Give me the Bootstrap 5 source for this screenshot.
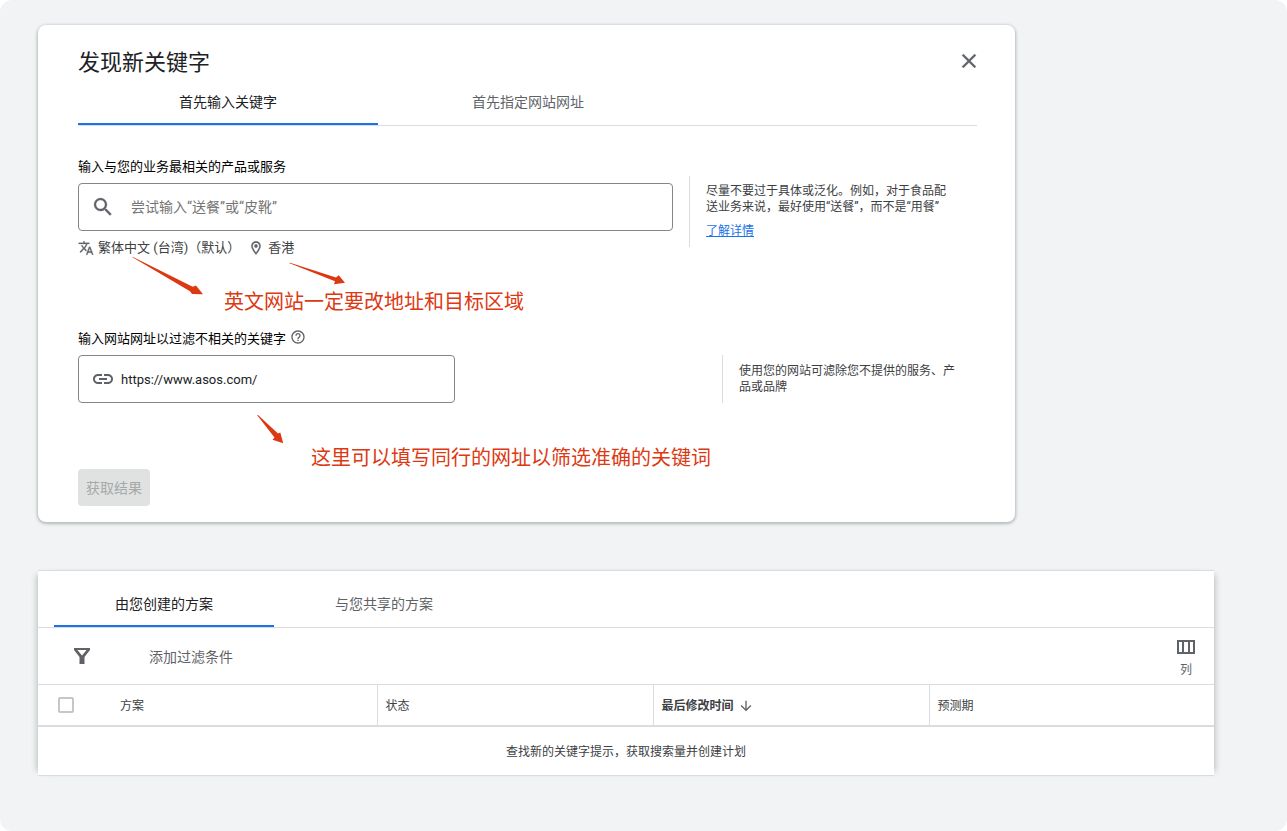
<!DOCTYPE html>
<html lang="zh-CN">
<head>
<meta charset="utf-8">
<meta name="viewport" content="width=device-width, initial-scale=1">
<title>发现新关键字</title>
<link href="https://cdn.jsdelivr.net/npm/bootstrap@5.3.0/dist/css/bootstrap.min.css" rel="stylesheet">
<style>
  body { font-family: Roboto, "Noto Sans CJK SC", sans-serif; font-size: 12px; line-height: 16px; color: #3c4043; background: #fff; }
  svg { fill: #5f6368; flex: none; display: block; }
  .bolder { stroke: #5f6368; stroke-width: .3; }
  .page { background: #f1f3f4; border-radius: 12px; padding: 25px 73px 55px 38px; }

  .finder { max-width: 977px; border-radius: 8px; padding: 24px 38px 16px 40px; box-shadow: 0 1px 3px 1px rgba(60,64,67,.32); }
  .finder h1 { font-size: 22px; line-height: 28px; font-weight: 400; color: #202124; }
  .close-btn { line-height: 0; margin-right: -4px; }

  .tab-bar { border-bottom: 1px solid #dadce0; }
  .tab-bar .nav-link { font-size: 14px; line-height: 20px; color: #5f6368; background: none; border: 0; border-bottom: 2px solid transparent; border-radius: 0; padding: 0; }
  .tab-bar .nav-link.active { color: #202124; border-bottom-color: #1a73e8; }
  .finder .tab-bar { margin-top: 3px; }
  .finder .nav-link { width: 300px; height: 45px; }
  .plans .nav-link { width: 220px; height: 56px; padding-top: 12px; }

  .field-title { font-size: 13px; line-height: 20px; color: #000; margin-bottom: 6px; }
  .text-field { height: 48px; border: 1px solid #80868b; border-radius: 4px; padding: 0 12px; }
  .text-field .form-control { font-size: 14px; line-height: 20px; color: #202124; background: none; }
  .text-field .form-control::placeholder { color: #757575; }
  .text-field .url-input { font-size: 13px; line-height: 20px; padding-top: 1px !important; margin-left: 6px; }
  .url-field { width: 377px; }
  .first-row { margin-top: 31px; gap: 16px; }
  .options { font-size: 13px; line-height: 20px; margin-top: 7px; }
  .options button { color: #3c4043; }
  .tip { border-left: 1px solid #dadce0; }
  .tip-wide { width: 288px; margin-top: 19px; padding: 7px 20px 8px 16px; }
  .tip-narrow { width: 255px; padding: 8px 14px 8px 16px; }
  .tip a { color: #1a73e8; }

  .remark { font-size: 20px; line-height: 24px; color: #dc3912; }
  .remark svg { position: absolute; fill: #dc3912; }
  .remark-area { margin: 32px 0 15px; padding-left: 146px; }
  .remark-area svg { left: 54px; top: -33px; }
  .remark-site { margin-top: 43px; padding-left: 233px; }
  .remark-site svg { left: 177px; top: -33px; }
  .submit-btn { height: 37px; padding: 0 8px; margin-top: -1px; border: 0; border-radius: 4px; font-size: 14px; line-height: 20px; }
  .submit-btn:disabled { background: #e0e2e1; color: #a6a8aa; opacity: 1; }

  .plans { margin-top: 48px; border: solid #dadce0; border-width: 1px 0; box-shadow: 6px 0 6px -5px rgba(60,64,67,.3), -6px 0 6px -5px rgba(60,64,67,.3); }
  .filter-bar { height: 57px; border-bottom: 1px solid #dadce0; padding: 0 16px 0 36px; }
  .filter-input { font-size: 14px; line-height: 22px; margin: 2px 0 0 59px; }
  .filter-input::placeholder { color: #5f6368; }
  .columns-btn { color: #5f6368; margin-top: 6px; }
  .plan-table { table-layout: fixed; color: #3c4043; }
  .plan-table th { height: 41px; padding: 1px 8px 0; font-weight: 400; border: 0; }
  .plan-table th:first-child { padding-top: 0; }
  .plan-table th + th + th { border-left: 1px solid #dadce0; }
  .plan-table thead tr { border-bottom: 2px solid #dadce0; }
  .plan-table td { height: 49px; padding: 1px 0 0; border: 0; }
  .plan-table .form-check-input { width: 16px; height: 16px; border: 2px solid #c4c7c5; border-radius: 2px; margin: 0 0 0 12px; display: block; }
  .col-check { width: 74px; } .col-name { width: 265px; } .col-mid { width: 276px; }
</style>
</head>
<body>
<main class="page min-vh-100">

  <section class="finder bg-white">
    <header class="d-flex justify-content-between align-items-start">
      <h1 class="mb-0">发现新关键字</h1>
      <button type="button" class="btn p-0 border-0 close-btn" aria-label="关闭">
        <svg class="bolder" width="24" height="24" viewBox="0 0 24 24"><path d="M19 6.41 17.59 5 12 10.59 6.41 5 5 6.41 10.59 12 5 17.59 6.41 19 12 13.41 17.59 19 19 17.59 13.41 12z"/></svg>
      </button>
    </header>

    <div class="nav tab-bar" role="tablist">
      <button type="button" class="nav-link active" role="tab" aria-selected="true">首先输入关键字</button>
      <button type="button" class="nav-link" role="tab" aria-selected="false">首先指定网站网址</button>
    </div>

    <form>
      <div class="d-flex align-items-start first-row">
        <div class="flex-grow-1">
          <label class="field-title d-block" for="kw">输入与您的业务最相关的产品或服务</label>
          <div class="text-field d-flex align-items-center">
            <svg class="bolder" width="24" height="24" viewBox="0 0 24 24"><path d="M15.5 14h-.79l-.28-.27A6.47 6.47 0 0 0 16 9.5 6.5 6.5 0 1 0 9.5 16c1.61 0 3.09-.59 4.23-1.57l.27.28v.79l5 4.99L20.49 19zm-6 0C7.01 14 5 11.99 5 9.5S7.01 5 9.5 5 14 7.01 14 9.5 11.99 14 9.5 14"/></svg>
            <input id="kw" type="text" class="form-control border-0 shadow-none p-0 ms-3" placeholder="尝试输入“送餐”或“皮靴”">
          </div>
          <div class="options d-flex">
            <button type="button" class="bg-transparent border-0 p-0 d-flex align-items-center gap-1">
              <svg class="bolder" width="16" height="16" viewBox="0 0 24 24"><path d="m12.87 15.07-2.54-2.51.03-.03A17.52 17.52 0 0 0 14.07 6H17V4h-7V2H8v2H1v1.99h11.17C11.5 7.92 10.44 9.75 9 11.35 8.07 10.32 7.3 9.19 6.69 8h-2c.73 1.63 1.73 3.17 2.98 4.56l-5.09 5.02L4 19l5-5 3.11 3.11zM18.5 10h-2L12 22h2l1.12-3h4.75L21 22h2zm-2.62 7 1.62-4.33L19.12 17z"/></svg>
              <span>繁体中文 (台湾)（默认）</span>
            </button>
            <button type="button" class="bg-transparent border-0 p-0 d-flex align-items-center gap-1 ms-2">
              <svg class="bolder" width="16" height="16" viewBox="0 0 24 24"><path d="M12 2C8.13 2 5 5.13 5 9c0 5.25 7 13 7 13s7-7.75 7-13c0-3.87-3.13-7-7-7M7 9c0-2.76 2.24-5 5-5s5 2.24 5 5c0 2.88-2.88 7.19-5 9.88C9.92 16.21 7 11.85 7 9"/><circle cx="12" cy="9" r="2.5"/></svg>
              <span>香港</span>
            </button>
          </div>
        </div>
        <aside class="tip tip-wide flex-shrink-0">
          <p class="mb-2">尽量不要过于具体或泛化。例如，对于食品配送业务来说，最好使用“送餐”，而不是“用餐”</p>
          <a href="#" class="d-block">了解详情</a>
        </aside>
      </div>

      <p class="remark remark-area position-relative">
        <svg width="216" height="40" viewBox="132 257 216 40" aria-hidden="true"><path d="M132 257 133 257 192.700 286.800 196 285.500 203 294.200 192 294 190 291.300zM289 263 290 262.800 336 277.500 338.700 275.300 345 282.800 334 284.200 335 281.200z"/></svg>
        英文网站一定要改地址和目标区域
      </p>

      <div class="d-flex align-items-end justify-content-between">
        <div>
          <div class="d-flex gap-1">
            <label class="field-title" for="site">输入网站网址以过滤不相关的关键字</label>
            <button type="button" class="bg-transparent border-0 p-0 align-self-start" aria-label="帮助">
              <svg width="16" height="16" viewBox="0 0 24 24"><path d="M11 18h2v-2h-2zm1-16C6.480 2 2 6.480 2 12s4.480 10 10 10 10-4.480 10-10S17.520 2 12 2m0 18c-4.410 0-8-3.590-8-8s3.590-8 8-8 8 3.590 8 8-3.590 8-8 8m0-14c-2.210 0-4 1.790-4 4h2c0-1.100.9-2 2-2s2 .9 2 2c0 2-3 1.750-3 5h2c0-2.250 3-2.500 3-5 0-2.210-1.790-4-4-4"/></svg>
            </button>
          </div>
          <div class="text-field url-field d-flex align-items-center">
            <svg width="24" height="24" viewBox="0 0 24 24"><path d="M3.900 12c0-1.710 1.390-3.100 3.100-3.100h4V7H7c-2.760 0-5 2.240-5 5s2.240 5 5 5h4v-1.900H7c-1.710 0-3.100-1.390-3.100-3.100M8 13h8v-2H8zm9-6h-4v1.900h4c1.710 0 3.100 1.390 3.100 3.100s-1.390 3.100-3.100 3.100h-4V17h4c2.760 0 5-2.240 5-5s-2.240-5-5-5"/></svg>
            <input id="site" type="text" class="form-control url-input border-0 shadow-none p-0" value="https://www.asos.com/">
          </div>
        </div>
        <aside class="tip tip-narrow">使用您的网站可滤除您不提供的服务、产品或品牌</aside>
      </div>

      <p class="remark remark-site position-relative mb-0">
        <svg width="32" height="32" viewBox="255 413 32 32" aria-hidden="true"><path d="M257 415 258 415 278 433.500 280.300 432.500 283.200 443.200 272.500 439.800 274.500 437.500z"/></svg>
        这里可以填写同行的网址以筛选准确的关键词
      </p>
      <button type="submit" class="btn submit-btn" disabled>获取结果</button>
    </form>
  </section>

  <section class="plans bg-white">
    <div class="nav tab-bar px-3" role="tablist">
      <button type="button" class="nav-link active" role="tab" aria-selected="true">由您创建的方案</button>
      <button type="button" class="nav-link" role="tab" aria-selected="false">与您共享的方案</button>
    </div>
    <div class="filter-bar d-flex align-items-center">
      <svg width="16" height="16" viewBox="0 0 16 16"><path fill-rule="evenodd" d="M0 0h16v2l-5.500 7v7h-5V9L0 2zM3.400 2 8 7.400 12.600 2z"/></svg>
      <input type="text" class="filter-input form-control border-0 shadow-none p-0 flex-grow-1 w-auto" placeholder="添加过滤条件" aria-label="添加过滤条件">
      <button type="button" class="columns-btn bg-transparent border-0 p-0 d-flex flex-column align-items-center gap-2">
        <svg width="24" height="14" viewBox="0 0 24 14"><path fill-rule="evenodd" d="M3 0h18v14H3zM5 2v10h3V2zM10 2v10h4V2zM16 2v10h3V2z"/></svg>
        <span>列</span>
      </button>
    </div>
    <table class="plan-table w-100">
      <colgroup><col class="col-check"><col class="col-name"><col class="col-mid"><col class="col-mid"><col></colgroup>
      <thead>
        <tr>
          <th scope="col"><input class="form-check-input" type="checkbox" aria-label="全选"></th>
          <th scope="col">方案</th>
          <th scope="col">状态</th>
          <th scope="col" aria-sort="descending">
            <div class="d-flex align-items-center gap-1">
              <strong>最后修改时间</strong>
              <svg width="16" height="16" viewBox="0 0 24 24"><path d="m20 12-1.410-1.410L13 16.170V4h-2v12.170l-5.580-5.590L4 12l8 8z"/></svg>
            </div>
          </th>
          <th scope="col">预测期</th>
        </tr>
      </thead>
      <tbody>
        <tr><td colspan="5" class="text-center">查找新的关键字提示，获取搜索量并创建计划</td></tr>
      </tbody>
    </table>
  </section>

</main>
<script src="https://cdn.jsdelivr.net/npm/bootstrap@5.3.0/dist/js/bootstrap.bundle.min.js"></script>
</body>
</html>
